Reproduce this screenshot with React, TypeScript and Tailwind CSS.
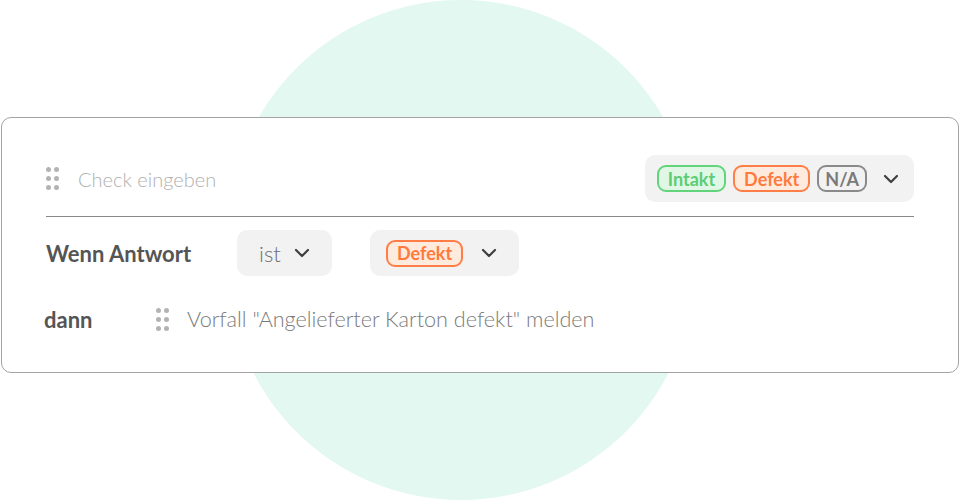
import React from "react";

const Dots = () => (
  <div className="grid grid-cols-2 gap-x-[3px] gap-y-[4px] w-[13px]">
    {Array.from({ length: 6 }).map((_, i) => (
      <span key={i} className="block w-[5px] h-[5px] rounded-full bg-[#b3b3b3]" />
    ))}
  </div>
);

const Chevron = () => (
  <svg width="16" height="10" viewBox="0 0 16 10" fill="none">
    <path d="M2 2l6 6 6-6" stroke="#3f3f3f" strokeWidth="2.2" strokeLinecap="round" strokeLinejoin="round" />
  </svg>
);

const Pill = ({ label, tone }: { label: string; tone: "green" | "orange" | "gray" }) => {
  const cls =
    tone === "green"
      ? "px-[9px] border-[#62d57c] bg-[#e1f7e6] text-[#5ccd74]"
      : tone === "orange"
      ? "px-[9px] border-[#ff7e47] bg-[#ffebde] text-[#ff7a3d]"
      : "px-[6px] border-[#8a8a8a] bg-[#f2f2f2] text-[#7a7a7a]";
  return (
    <span className={`inline-flex items-center h-[27px] rounded-[9px] border-2 text-[18px] font-bold leading-none ${cls}`}>
      {label}
    </span>
  );
};

export default function App() {
  return (
    <div
      className="relative w-[960px] h-[500px] overflow-hidden bg-white pt-[117px]"
      style={{ fontFamily: "Lato, 'Open Sans', sans-serif" }}
    >
      <div className="absolute left-[228px] top-0 w-[466px] h-[500px] rounded-full bg-[#e2f8f0]" />
      <div className="relative ml-[1px] w-[958px] h-[256px] rounded-[10px] border border-[#a3a3a3] bg-white pl-[44px] pr-[44px] pt-[37px]">
        <div className="flex items-center justify-between h-[47px]">
          <div className="flex items-center gap-[19px]">
            <Dots />
            <span className="text-[20px] font-light text-[#b0b0b0]">Check eingeben</span>
          </div>
          <div className="flex items-center h-[47px] rounded-[10px] bg-[#f2f2f2] pl-[12px] pr-[15px] gap-[7px]">
            <Pill label="Intakt" tone="green" />
            <Pill label="Defekt" tone="orange" />
            <Pill label="N/A" tone="gray" />
            <span className="ml-[9px] flex items-center">
              <Chevron />
            </span>
          </div>
        </div>
        <div className="mt-[14px] h-px bg-[#8a8a8a]" />
        <div className="mt-[13px] flex items-center h-[46px]">
          <span className="w-[191px] text-[22px] font-bold text-[#555555]">Wenn Antwort</span>
          <div className="flex items-center h-[46px] w-[95px] rounded-[10px] bg-[#f2f2f2] pl-[22px]">
            <span className="text-[22px] font-light text-[#6f6f6f]">ist</span>
            <span className="ml-[13px] flex items-center">
              <Chevron />
            </span>
          </div>
          <div className="ml-[38px] flex items-center h-[46px] w-[149px] rounded-[10px] bg-[#f2f2f2] pl-[16px]">
            <Pill label="Defekt" tone="orange" />
            <span className="ml-[18px] flex items-center">
              <Chevron />
            </span>
          </div>
        </div>
        <div className="mt-[31px] flex items-center h-[24px]">
          <span className="-ml-[2px] w-[112px] text-[22px] font-bold text-[#555555]">dann</span>
          <Dots />
          <span className="ml-[18px] text-[21.6px] font-light text-[#7a7a7a]">
            Vorfall "Angelieferter Karton defekt" melden
          </span>
        </div>
      </div>
    </div>
  );
}
